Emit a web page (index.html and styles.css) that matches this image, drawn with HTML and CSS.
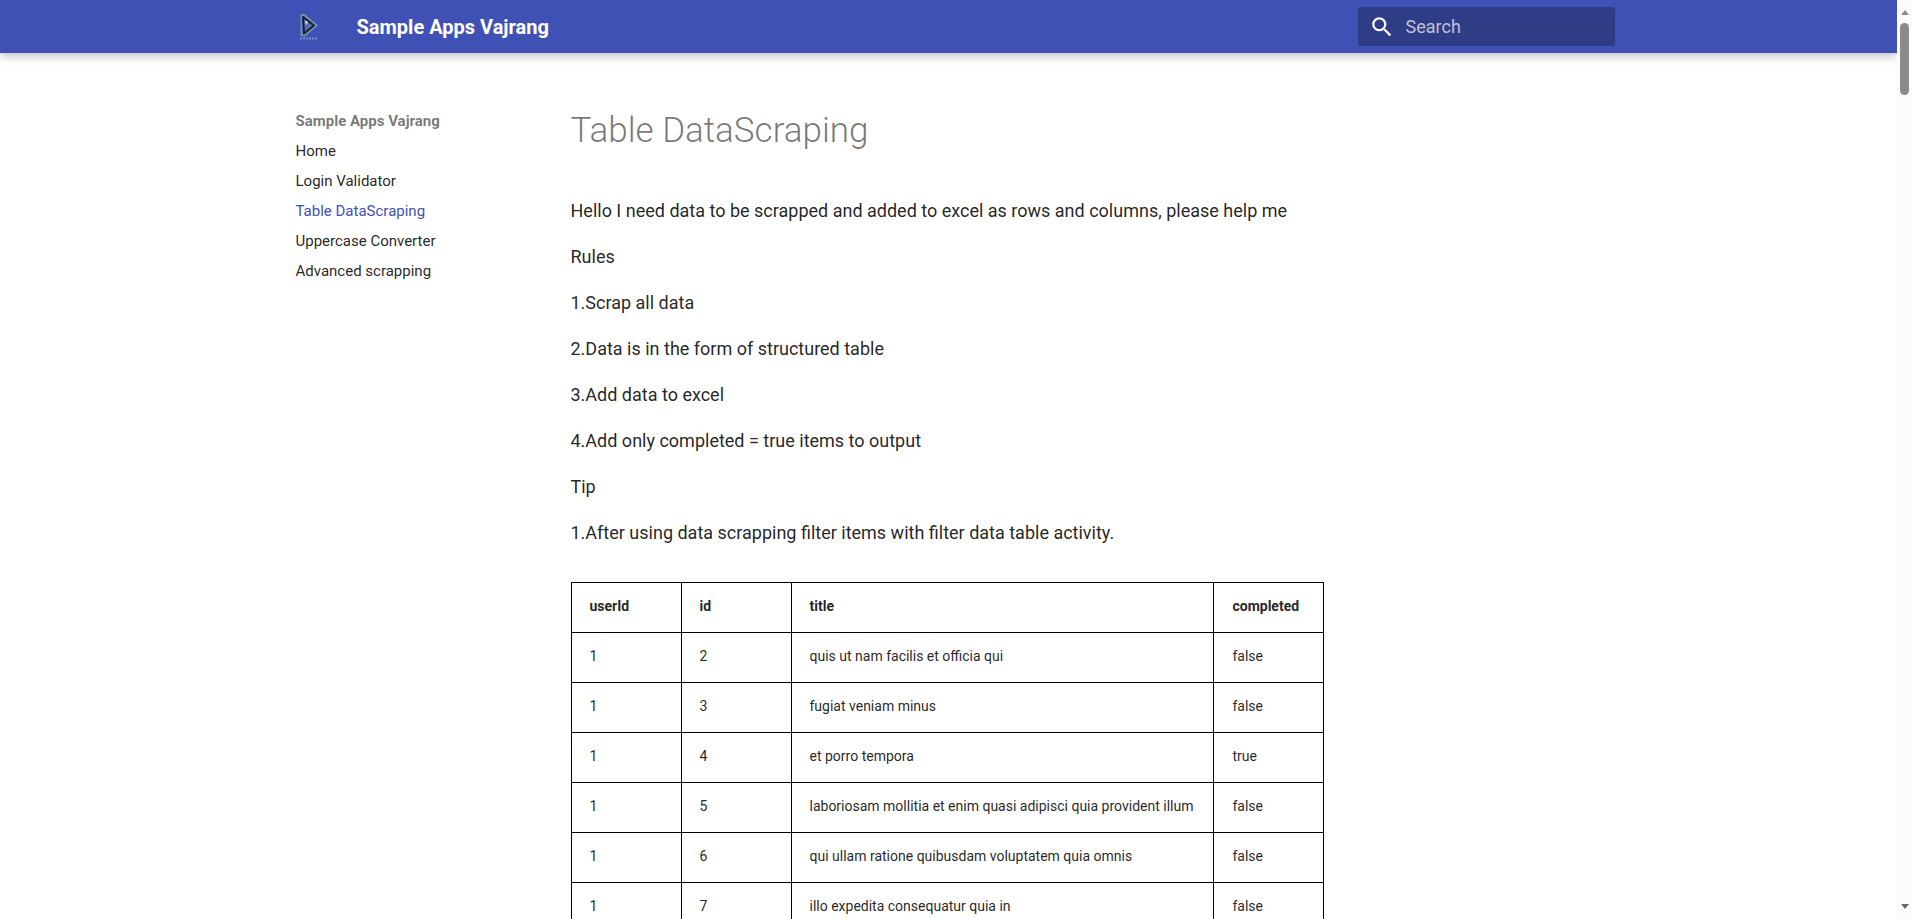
FILE: index.html
```html
<!DOCTYPE html>
<html lang="en">
<head>
<meta charset="utf-8">
<meta name="viewport" content="width=device-width, initial-scale=1">
<title>Table DataScraping - Sample Apps Vajrang</title>
<link rel="stylesheet" href="styles.css">
</head>
<body class="page">
<div class="view">
  <header class="header">
    <div class="header-inner grid">
      <a class="logo" href="#" aria-label="Sample Apps Vajrang">
        <svg viewBox="0 0 26 26" width="26" height="26" aria-hidden="true">
          <path d="M5.500 1.200L8 .8 20.500 11.500 8.500 21.500 5.500 21Z" fill="none" stroke="#7593a8" stroke-width="2"/>
          <path d="M7 3L18 11.500 8 19.500Z" fill="#5a6cac" stroke="#17213f" stroke-width="2" stroke-linejoin="round"/>
          <path d="M9 6.500L12 8 10 11Z" fill="#dfe6f2"/>
          <path d="M4 24.500h18" stroke="#7c8cb4" stroke-width="2" stroke-dasharray="2 1"/>
        </svg>
      </a>
      <div class="site-name">Sample Apps Vajrang</div>
      <form class="search" role="search">
        <svg class="search-icon" viewBox="0 0 24 24" width="26" height="26" aria-hidden="true"><path fill="#fff" d="M9.500 3A6.500 6.500 0 0 1 16 9.500c0 1.610-.59 3.090-1.560 4.230l.27.27h.79l5 5-1.500 1.500-5-5v-.79l-.27-.27A6.516 6.516 0 0 1 9.500 16 6.500 6.500 0 0 1 3 9.500 6.500 6.500 0 0 1 9.500 3m0 2C7 5 5 7 5 9.500S7 14 9.500 14 14 12 14 9.500 12 5 9.500 5Z"/></svg>
        <input class="search-input" type="text" aria-label="Search" placeholder="Search">
      </form>
    </div>
  </header>
  <div class="main grid">
    <nav class="nav" aria-label="Navigation">
      <div class="nav-title">Sample Apps Vajrang</div>
      <a class="nav-link" href="#">Home</a>
      <a class="nav-link" href="#">Login Validator</a>
      <a class="nav-link nav-link-active" href="#" aria-current="page">Table DataScraping</a>
      <a class="nav-link" href="#">Uppercase Converter</a>
      <a class="nav-link" href="#">Advanced scrapping</a>
    </nav>
    <main class="content">
      <h1 class="title">Table DataScraping</h1>
      <p>Hello I need data to be scrapped and added to excel as rows and columns, please help me</p>
      <p>Rules</p>
      <p>1.Scrap all data</p>
      <p>2.Data is in the form of structured table</p>
      <p>3.Add data to excel</p>
      <p>4.Add only completed = true items to output</p>
      <p>Tip</p>
      <p>1.After using data scrapping filter items with filter data table activity.</p>
      <table class="table">
        <thead>
          <tr><th>userId</th><th>id</th><th>title</th><th>completed</th></tr>
        </thead>
        <tbody>
          <tr><td>1</td><td>2</td><td>quis ut nam facilis et officia qui</td><td>false</td></tr>
          <tr><td>1</td><td>3</td><td>fugiat veniam minus</td><td>false</td></tr>
          <tr><td>1</td><td>4</td><td>et porro tempora</td><td>true</td></tr>
          <tr><td>1</td><td>5</td><td>laboriosam mollitia et enim quasi adipisci quia provident illum</td><td>false</td></tr>
          <tr><td>1</td><td>6</td><td>qui ullam ratione quibusdam voluptatem quia omnis</td><td>false</td></tr>
          <tr><td>1</td><td>7</td><td>illo expedita consequatur quia in</td><td>false</td></tr>
        </tbody>
      </table>
    </main>
  </div>
</div>
<div class="scrollbar" aria-hidden="true">
  <span class="arrow arrow-up"></span>
  <span class="thumb"></span>
  <span class="arrow arrow-down"></span>
</div>
</body>
</html>
```
FILE: styles.css
```css
* { box-sizing: border-box; }

.page {
  margin: 0;
  height: 100vh;
  display: flex;
  overflow: hidden;
  background: #fff;
  color: rgba(0, 0, 0, 0.87);
  font-family: Roboto, "Liberation Sans", sans-serif;
  font-size: 18px;
  line-height: 28px;
}

.view { flex: 1; min-width: 0; overflow: hidden; }

.grid { max-width: 1342px; margin: 0 auto; }

.header {
  background: #4051b5;
  color: #fff;
  box-shadow: 0 0 4px rgba(0, 0, 0, 0.1), 0 4px 9px rgba(0, 0, 0, 0.2);
}

.header-inner {
  display: flex;
  align-items: center;
  height: 53px;
  padding: 0 5px;
}

.logo { display: flex; padding: 0 13px; }

.site-name {
  flex: 1;
  margin-left: 22px;
  font-size: 20px;
  font-weight: 700;
}

.search {
  display: flex;
  align-items: center;
  width: 257px;
  height: 39px;
  padding-left: 11px;
  border-radius: 2px;
  background: rgba(0, 0, 0, 0.26);
}

.search-icon { flex: none; }

.search-input {
  flex: 1;
  min-width: 0;
  padding: 0 11px;
  border: 0;
  outline: 0;
  background: transparent;
  color: #fff;
  font: inherit;
}

.search-input::placeholder { color: rgba(255, 255, 255, 0.7); opacity: 1; }

.main { display: flex; padding-top: 55px; }

.nav {
  flex: none;
  display: flex;
  flex-direction: column;
  align-items: flex-start;
  gap: 10px;
  width: 266px;
  padding: 3px 0 0 18px;
  font-size: 15px;
  line-height: 20px;
}

.nav-title { font-weight: 700; color: rgba(0, 0, 0, 0.54); }

.nav-link { color: inherit; text-decoration: none; }

.nav-link-active { color: #4051b5; }

.content { flex: 1; min-width: 0; padding: 0 27px; }

.title {
  margin: 0 0 43px;
  color: rgba(0, 0, 0, 0.54);
  font-size: 35px;
  font-weight: 300;
  line-height: 46px;
}

.content p { margin: 0 0 18px; }

.table {
  margin-top: 35px;
  border-collapse: collapse;
  font-size: 14px;
  line-height: 23px;
}

.table th,
.table td {
  min-width: 110px;
  padding: 12px 20px 14px 18px;
  border: 1px solid #000;
  text-align: left;
  vertical-align: top;
}

.table th { font-weight: 700; }

.scrollbar {
  flex: none;
  display: flex;
  flex-direction: column;
  align-items: center;
  width: 15px;
  padding: 10px 0;
  background: #fcfcfc;
}

.arrow { border: 4px solid transparent; }

.arrow-up { border-top: 0; border-bottom: 5px solid #8b8b8b; }

.arrow-down { margin-top: auto; border-bottom: 0; border-top: 5px solid #6b6b6b; }

.thumb {
  width: 9px;
  height: 72px;
  margin-top: 8px;
  border-radius: 5px;
  background: #8b8b8b;
}
```
